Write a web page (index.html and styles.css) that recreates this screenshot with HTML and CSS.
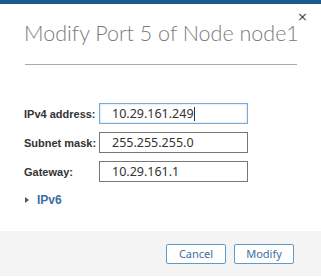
FILE: index.html
```html
<!DOCTYPE html>
<html>
<head>
  <meta charset="UTF-8">
  <title>Modify Port</title>
  <link rel="stylesheet" href="styles.css">
</head>
<body>
  <div class="dialog">
    <div class="dialog-header">
      <h1 class="dialog-title">Modify Port 5 of Node node1</h1>
      <span class="close">&times;</span>
    </div>
    <div class="rule"></div>

    <!-- 入力フォーム -->
    <form class="port-form">
      <label class="field-label" for="ipv4">IPv4 address:</label>
      <div class="field focused"><span id="ipv4">10.29.161.249</span><span class="caret"></span></div>

      <label class="field-label" for="mask">Subnet mask:</label>
      <div class="field"><span id="mask">255.255.255.0</span></div>

      <label class="field-label" for="gw">Gateway:</label>
      <div class="field"><span id="gw">10.29.161.1</span></div>
    </form>

    <div class="toggle"><span class="arrow"></span>IPv6</div>

    <div class="dialog-footer">
      <button class="btn">Cancel</button>
      <button class="btn">Modify</button>
    </div>
  </div>
</body>
</html>
```

FILE: styles.css
```css
body {
  margin: 0;
  background: #fff;
  font-family: "Noto Sans", "Liberation Sans", sans-serif;
}

.dialog {
  width: 321px;
  height: 277px;
  border-top: 4px solid #1d5a8a;
  box-sizing: border-box;
  display: flex;
  flex-direction: column;
}

/* ヘッダー */
.dialog-header {
  position: relative;
  padding: 16px 0 0 24px;
  height: 44px;
}

.dialog-title {
  margin: 0;
  font-family: "Lato", sans-serif;
  font-weight: 300;
  font-size: 21.5px;
  line-height: 26px;
  color: #7b7b7b;
  white-space: nowrap;
}

.close {
  position: absolute;
  right: 13px;
  top: 6px;
  font-size: 13px;
  line-height: 13px;
  color: #444;
  font-family: "DejaVu Sans", sans-serif;
}

.rule {
  margin: 0 24px 0 25px;
  border-top: 1px solid #aaa;
}

/* フォーム */
.port-form {
  margin: 38px 0 0 24px;
  display: grid;
  grid-template-columns: 75px 149px;
  row-gap: 8px;
  align-items: center;
}

.field-label {
  font-family: "Liberation Sans", sans-serif;
  font-weight: bold;
  font-size: 11px;
  color: #333;
  white-space: nowrap;
}

.field {
  height: 21px;
  box-sizing: border-box;
  border: 1px solid #777;
  padding-left: 12px;
  font-size: 12.5px;
  color: #333;
  display: flex;
  align-items: center;
}

.field.focused {
  border-color: #7fa8cf;
  box-shadow: inset 0 0 2px #a9c6e2;
}

.caret {
  width: 1px;
  height: 14px;
  background: #333;
}

.toggle {
  margin: 11px 0 0 25px;
  font-family: "Liberation Sans", sans-serif;
  font-size: 12px;
  font-weight: bold;
  color: #3c6fa8;
  display: flex;
  align-items: center;
}

.arrow {
  width: 0;
  height: 0;
  border-left: 4px solid #555;
  border-top: 3.5px solid transparent;
  border-bottom: 3.5px solid transparent;
  margin-right: 8px;
}

/* フッター */
.dialog-footer {
  margin-top: auto;
  height: 45px;
  margin-bottom: 1px;
  background: #f4f4f4;
  display: flex;
  justify-content: flex-end;
  align-items: center;
  gap: 8px;
  padding-right: 27px;
}

.btn {
  width: 60px;
  height: 20px;
  border: 1px solid #5f9ccc;
  border-radius: 2px;
  background: #fff;
  color: #3d6f9f;
  font-family: "Noto Sans", sans-serif;
  font-size: 11px;
  padding: 0;
}
```
